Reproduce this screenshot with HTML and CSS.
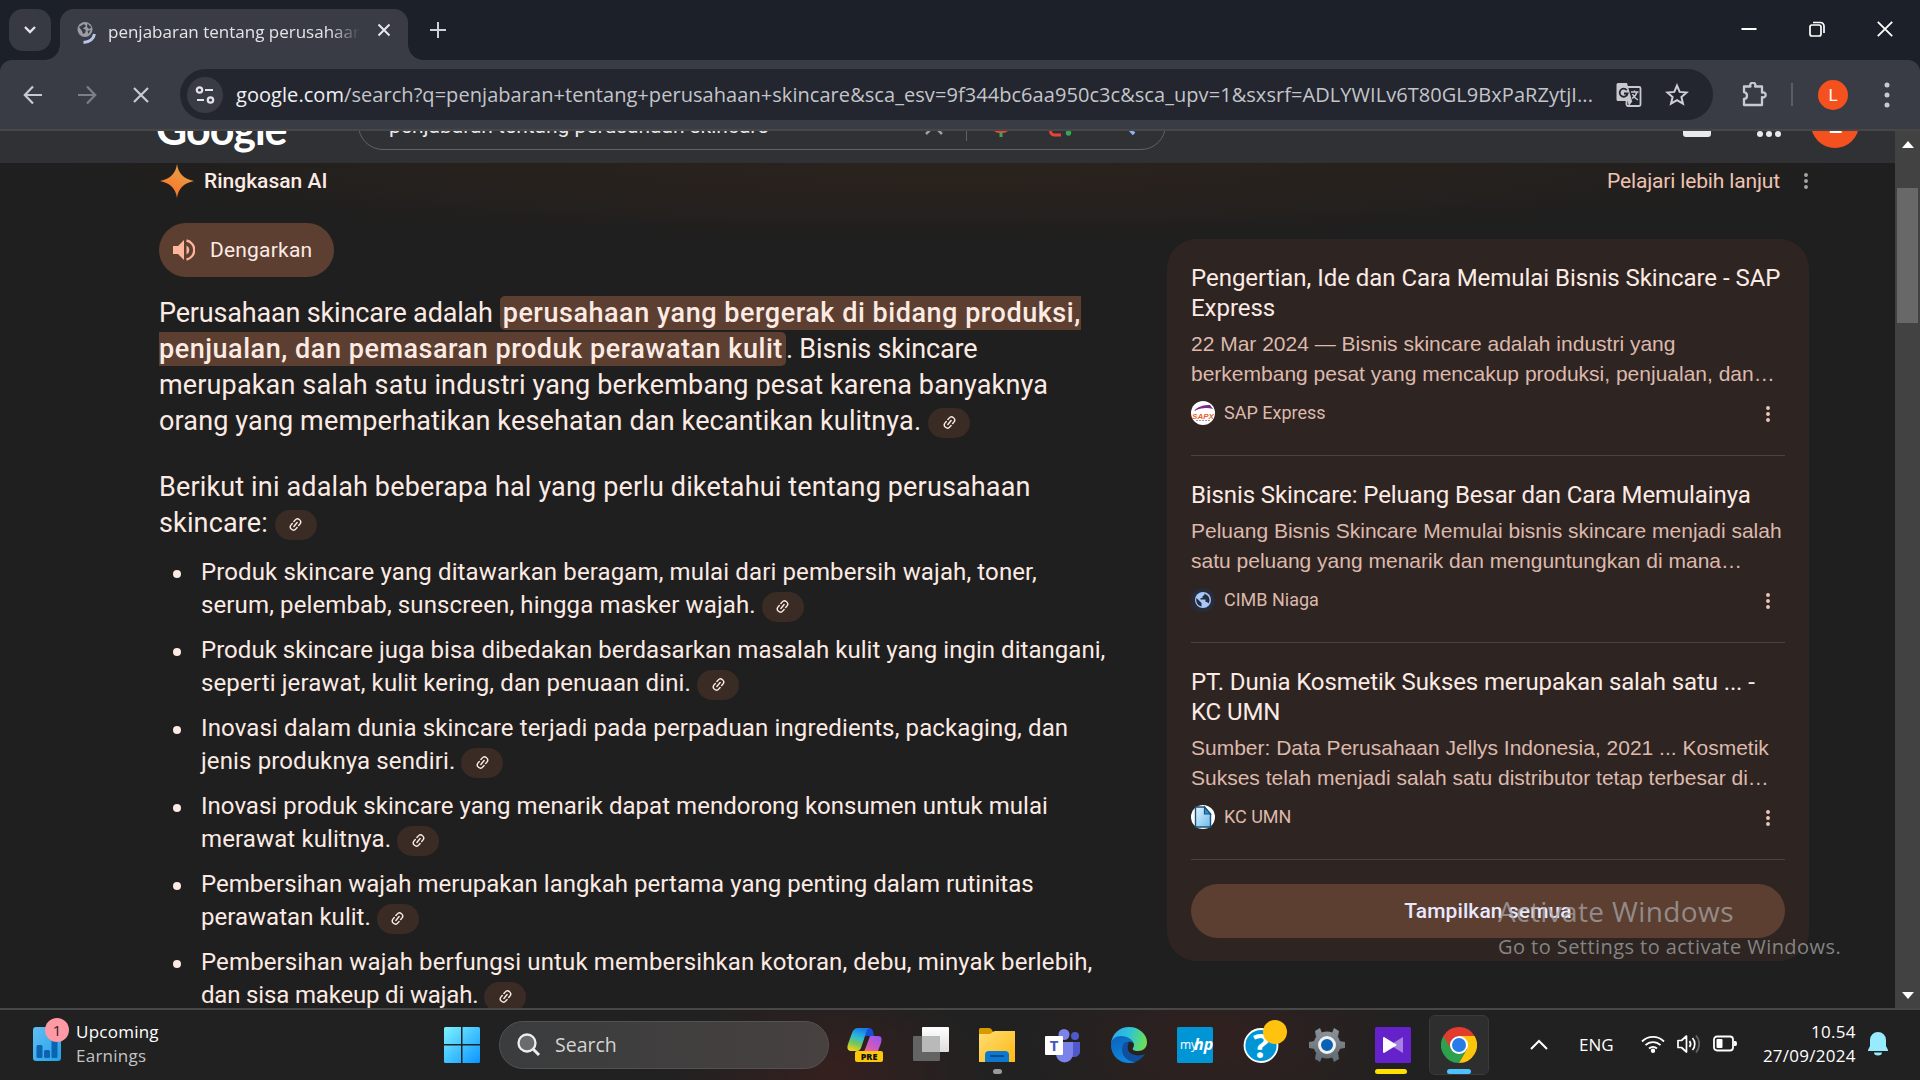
FILE: index.html
```html
<!DOCTYPE html>
<html lang="id">
<head>
<meta charset="utf-8">
<title>penjabaran tentang perusahaan skincare</title>
<link rel="stylesheet" href="styles.css">
</head>
<body>
<svg class="defs" width="0" height="0" aria-hidden="true">
  <symbol id="link" viewBox="0 0 24 24"><g fill="none" stroke="currentColor" stroke-width="2.3" stroke-linecap="round" transform="rotate(-50 12 12)"><path d="M10 7H7a5 5 0 0 0 0 10h3M14 7h3a5 5 0 0 1 0 10h-3M8 12h8"/></g></symbol>
  <symbol id="dots" viewBox="0 0 6 24"><g fill="currentColor"><circle cx="3" cy="4" r="2.6"/><circle cx="3" cy="12" r="2.6"/><circle cx="3" cy="20" r="2.6"/></g></symbol>
</svg>

<header class="tabstrip">
  <button class="tab-search"><svg width="14" height="10" viewBox="0 0 14 10"><path d="M2 2l5 5 5-5" fill="none" stroke="#e3e3e8" stroke-width="2.4"/></svg></button>
  <div class="tab">
    <svg class="favicon" width="20" height="24" viewBox="0 0 20 24"><circle cx="8" cy="8.500" r="7.500" fill="#9a9da6"/><path d="M2 6l5-3 2 2-3 2.500 3 1.500-1 3-2 1-1-3zM10.500 2.500l4 4-2.500 1.500-2-2zM10.500 10l3-1-2 4z" fill="#3a3c45"/><path d="M17.500 13c-1 5-5 8-11 8.500" fill="none" stroke="#b9c6ea" stroke-width="3"/></svg>
    <span class="tab-title">penjabaran tentang perusahaan</span>
    <svg class="tab-close" width="14" height="14" viewBox="0 0 14 14"><path d="M1.500 1.500l11 11M12.500 1.500l-11 11" stroke="#e8e8ec" stroke-width="2"/></svg>
  </div>
  <svg class="new-tab" width="16" height="16" viewBox="0 0 16 16"><path d="M8 0v16M0 8h16" stroke="#d0d2d8" stroke-width="2"/></svg>
  <div class="window-controls">
    <svg width="16" height="16" viewBox="0 0 16 16"><path d="M.5 8h15" stroke="#fff" stroke-width="2"/></svg>
    <svg width="16" height="16" viewBox="0 0 16 16" fill="none" stroke="#fff" stroke-width="1.700"><rect x="1" y="4" width="11" height="11" rx="2"/><path d="M4 1.500h7.500a3.500 3.500 0 0 1 3.500 3.500V12"/></svg>
    <svg width="16" height="16" viewBox="0 0 16 16"><path d="M.8.8l14.400 14.400M15.200.8L.8 15.200" stroke="#fff" stroke-width="1.800"/></svg>
  </div>
</header>

<nav class="toolbar">
  <div class="nav-buttons">
    <svg width="20" height="20" viewBox="0 0 20 20"><path d="M19 10H2M10 1.500L1.800 10 10 18.500" fill="none" stroke="#c7cad3" stroke-width="2.200"/></svg>
    <svg width="20" height="20" viewBox="0 0 20 20"><path d="M1 10h17M10 1.500l8.200 8.500-8.200 8.500" fill="none" stroke="#7d7f87" stroke-width="2.200"/></svg>
    <svg width="20" height="20" viewBox="0 0 20 20"><path d="M3 3l14 14M17 3L3 17" stroke="#c7cad3" stroke-width="2.200"/></svg>
  </div>
  <div class="omnibox">
    <span class="site-info"><svg width="20" height="20" viewBox="0 0 20 20" fill="none" stroke="#e3e3e8" stroke-width="2.200"><circle cx="4.500" cy="5" r="2.700"/><path d="M10 5h8M2 15h7"/><circle cx="15.500" cy="15" r="2.700"/></svg></span>
    <span class="url"><span class="host">google.com</span>/search?q=penjabaran+tentang+perusahaan+skincare&amp;sca_esv=9f344bc6aa950c3c&amp;sca_upv=1&amp;sxsrf=ADLYWILv6T80GL9BxPaRZytjI...</span>
    <span class="translate"><svg width="26" height="26" viewBox="0 0 26 26"><rect x="10.500" y="5" width="14" height="19" rx="1.500" fill="none" stroke="#c7c9cf" stroke-width="1.800"/><path d="M2 1h9l5 18H2a1.500 1.500 0 0 1-1.500-1.500v-15A1.500 1.500 0 0 1 2 1z" fill="#c7c9cf"/><path d="M11.500 19l1.500 5 3.500-5z" fill="#c7c9cf"/><path d="M10.800 8.200a4 4 0 1 0 .8 3.300H8" fill="none" stroke="#23262e" stroke-width="1.800"/><path d="M15 10h7.500M18.500 8.500V10M21 10c-.8 3-2.500 5-5 6.500M16.500 12c1 2.500 3 4.500 5.500 6" fill="none" stroke="#c7c9cf" stroke-width="1.400"/></svg></span>
    <svg width="24" height="24" viewBox="0 0 24 24"><path d="M12 2.600l2.700 6.300 6.900.6-5.200 4.500 1.600 6.700-6-3.600-6 3.600 1.600-6.700-5.200-4.500 6.900-.6z" fill="none" stroke="#cfd0d6" stroke-width="2"/></svg>
  </div>
  <svg class="puzzle" width="26" height="26" viewBox="0 0 26 26"><path d="M3 4.500h6.500a2.600 2.600 0 1 1 4.600 0H21v6.200a2.500 2.500 0 1 1 0 4.400V23H3v-6c4-.5 4-6.200 0-6.800z" fill="none" stroke="#c7cad3" stroke-width="2.300" stroke-linejoin="round"/></svg>
  <span class="separator"></span>
  <span class="avatar">L</span>
  <svg class="menu" width="6" height="26" viewBox="0 0 6 26" fill="#c7cad3"><circle cx="3" cy="3" r="2.500"/><circle cx="3" cy="13" r="2.500"/><circle cx="3" cy="23" r="2.500"/></svg>
</nav>

<div class="viewport">
  <div class="page">
    <div class="search-header">
      <span class="logo">Google</span>
      <div class="search-box">
        <span class="query">penjabaran tentang perusahaan skincare</span>
        <svg class="clear" width="18" height="22" viewBox="0 0 18 22"><path d="M1 3l16 16M17 3L1 19" stroke="#9aa0a6" stroke-width="2.500"/></svg>
        <span class="box-divider"></span>
        <svg class="mic" width="24" height="30" viewBox="0 0 24 30"><path d="M3 16c0 11 18 11 18 0" fill="none" stroke="#ea4335" stroke-width="4"/><path d="M12 25.500V30" stroke="#34a853" stroke-width="3"/></svg>
        <svg class="lens" width="24" height="24" viewBox="0 0 24 24"><path d="M1.500 14v4a4 4 0 0 0 4 4H12" fill="none" stroke="#ea4335" stroke-width="3"/><circle cx="19.500" cy="20" r="2.700" fill="#34a853"/></svg>
        <svg class="glass" width="26" height="26" viewBox="0 0 26 26"><circle cx="10" cy="10" r="7" fill="none" stroke="#8ab4f8" stroke-width="3"/><path d="M15 15l8 9" stroke="#8ab4f8" stroke-width="3.500"/></svg>
      </div>
      <div class="account">
        <svg width="28" height="30" viewBox="0 0 28 30"><path d="M9 2h10v12l9 10v3a3 3 0 0 1-3 3H3a3 3 0 0 1-3-3v-3L9 14z" fill="#e8eaed"/></svg>
        <svg width="24" height="24" viewBox="0 0 24 24" fill="#e8eaed"><circle cx="3" cy="12" r="3"/><circle cx="12" cy="12" r="3"/><circle cx="21" cy="12" r="3"/><circle cx="3" cy="21" r="3"/><circle cx="12" cy="21" r="3"/><circle cx="21" cy="21" r="3"/></svg>
        <span class="account-avatar">L</span>
      </div>
    </div>

    <main class="overview">
      <section class="answer">
        <h1 class="heading"><svg width="34" height="34" viewBox="0 0 34 34"><defs><linearGradient id="spark" x1="0" y1="1" x2=".6" y2="0"><stop offset="0" stop-color="#ff6a1a"/><stop offset="1" stop-color="#e8a04a"/></linearGradient></defs><path d="M17 0c1.500 9.500 6.500 15 17 17-10.500 2-15.500 7.500-17 17-1.500-9.500-6.500-15-17-17 10.500-2 15.500-7.500 17-17z" fill="url(#spark)"/></svg><span>Ringkasan AI</span></h1>
        <button class="listen"><svg width="22" height="22" viewBox="0 0 22 22"><path d="M0 7v8h5l6 6V1L5 7z" fill="#ffb59b"/><path d="M13.500 6.500v9a5 5 0 0 0 0-9z" fill="#ffb59b"/><path d="M13.500 1.500a9.700 9.700 0 0 1 0 19" fill="none" stroke="#ffb59b" stroke-width="2.300"/></svg><span>Dengarkan</span></button>
        <p><span class="tight">Perusahaan skincare adalah</span> <mark>perusahaan yang bergerak di bidang produksi,<br>penjualan, dan pemasaran produk perawatan kulit</mark><span class="tight">. Bisnis skincare</span><br>
          merupakan salah satu industri yang berkembang pesat karena banyaknya<br>
          orang yang memperhatikan kesehatan dan kecantikan kulitnya. <span class="chip"><svg><use href="#link"/></svg></span></p>
        <p>Berikut ini adalah beberapa hal yang perlu diketahui tentang perusahaan<br>
          skincare: <span class="chip"><svg><use href="#link"/></svg></span></p>
        <ul>
          <li>Produk skincare yang ditawarkan beragam, mulai dari pembersih wajah, toner,<br>serum, pelembab, sunscreen, hingga masker wajah. <span class="chip"><svg><use href="#link"/></svg></span></li>
          <li><span class="snug">Produk skincare juga bisa dibedakan berdasarkan masalah kulit yang ingin ditangani,</span><br>seperti jerawat, kulit kering, dan penuaan dini. <span class="chip"><svg><use href="#link"/></svg></span></li>
          <li>Inovasi dalam dunia skincare terjadi pada perpaduan ingredients, packaging, dan<br>jenis produknya sendiri. <span class="chip"><svg><use href="#link"/></svg></span></li>
          <li><span class="snug">Inovasi produk skincare yang menarik dapat mendorong konsumen untuk mulai</span><br>merawat kulitnya. <span class="chip"><svg><use href="#link"/></svg></span></li>
          <li><span class="snug">Pembersihan wajah merupakan langkah pertama yang penting dalam rutinitas</span><br><span class="snug">perawatan kulit.</span> <span class="chip"><svg><use href="#link"/></svg></span></li>
          <li>Pembersihan wajah berfungsi untuk membersihkan kotoran, debu, minyak berlebih,<br><span class="tight">dan sisa makeup di wajah.</span> <span class="chip"><svg><use href="#link"/></svg></span></li>
        </ul>
      </section>

      <aside class="sources">
        <div class="learn-more"><span>Pelajari lebih lanjut</span><svg><use href="#dots"/></svg></div>
        <div class="card">
          <article>
            <h2 class="wide">Pengertian, Ide dan Cara Memulai Bisnis Skincare - SAP<br>Express</h2>
            <p>22 Mar 2024 — Bisnis skincare adalah industri yang<br>berkembang pesat yang mencakup produksi, penjualan, dan…</p>
            <footer><svg width="24" height="24" viewBox="0 0 24 24"><circle cx="12" cy="12" r="12" fill="#fff"/><path d="M3 10c4-5 10-6 16-6l3 4c-6-2-13-1-19 2z" fill="#7b2a86"/><text x="12" y="17.500" text-anchor="middle" class="sapx">SAPX</text><path d="M5 19.500h15" stroke="#b48bbd" stroke-width="1" stroke-dasharray="2 1"/></svg><span>SAP Express</span><svg class="kebab"><use href="#dots"/></svg></footer>
          </article>
          <article>
            <h2>Bisnis Skincare: Peluang Besar dan Cara Memulainya</h2>
            <p>Peluang Bisnis Skincare Memulai bisnis skincare menjadi salah<br>satu peluang yang menarik dan menguntungkan di mana…</p>
            <footer><svg width="24" height="24" viewBox="0 0 24 24"><circle cx="12" cy="12" r="12" fill="#262c3a"/><circle cx="12" cy="12" r="8" fill="#a8c7fa"/><path d="M5.500 10l5 5v3.500c-4-.8-6-5-5-8.500zM13 5.500c1 1 0 2.500-1.500 2.500v2h-2v1.500h5V14h1.500l1.500 1.500c2-3 1.500-8-4.500-10z" fill="#262c3a"/></svg><span>CIMB Niaga</span><svg class="kebab"><use href="#dots"/></svg></footer>
          </article>
          <article>
            <h2>PT. Dunia Kosmetik Sukses merupakan salah satu ... -<br>KC UMN</h2>
            <p>Sumber: Data Perusahaan Jellys Indonesia, 2021 ... Kosmetik<br>Sukses telah menjadi salah satu distributor tetap terbesar di…</p>
            <footer><svg width="24" height="24" viewBox="0 0 24 24"><defs><linearGradient id="doc" x1="0" y1="0" x2="1" y2="1"><stop offset="0" stop-color="#e4f4fd"/><stop offset="1" stop-color="#6cbcec"/></linearGradient></defs><circle cx="12" cy="12" r="12" fill="#fff"/><path d="M4.500 2h9l6 7v13h-15z" fill="url(#doc)" stroke="#15537e" stroke-width="1.400"/><path d="M13.500 2v7h6z" fill="#2b95d6" stroke="#15537e" stroke-width="1.200"/></svg><span>KC UMN</span><svg class="kebab"><use href="#dots"/></svg></footer>
          </article>
          <button class="show-all">Tampilkan semua</button>
        </div>
      </aside>
    </main>
  </div>
  <div class="scrollbar">
    <svg width="12" height="7" viewBox="0 0 12 7"><path d="M6 0l6 7H0z" fill="#fff"/></svg>
    <span class="thumb"></span>
    <svg width="12" height="7" viewBox="0 0 12 7"><path d="M0 0h12L6 7z" fill="#fff"/></svg>
  </div>
</div>

<div class="watermark"><strong>Activate Windows</strong><span>Go to Settings to activate Windows.</span></div>

<footer class="taskbar">
  <div class="widget">
    <span class="widget-icon"><svg width="28" height="34" viewBox="0 0 28 34"><defs><linearGradient id="wg" x1="0" y1="0" x2="1" y2="1"><stop offset="0" stop-color="#62bdf3"/><stop offset="1" stop-color="#1fa3ea"/></linearGradient></defs><rect width="28" height="34" rx="3" fill="url(#wg)"/><rect x="3.500" y="18" width="6" height="13" rx="1.500" fill="#0c63b0"/><rect x="11" y="23" width="6" height="8" rx="1.500" fill="#0c63b0"/><rect x="18.500" y="12" width="6" height="19" rx="1.500" fill="#0c63b0"/></svg><span class="badge">1</span></span>
    <div class="widget-text"><span>Upcoming</span><span class="dim">Earnings</span></div>
  </div>
  <div class="dock">
    <svg class="start" width="36" height="36" viewBox="0 0 36 36"><defs><linearGradient id="win" x1="0" y1="0" x2="1" y2="1"><stop offset="0" stop-color="#7df3ff"/><stop offset="1" stop-color="#0a95ff"/></linearGradient></defs><path d="M1.500 0H17v17H0V1.500A1.500 1.500 0 0 1 1.500 0zM18.500 0h16A1.500 1.500 0 0 1 36 1.500V17H18.500zM0 18.500h17V36H1.500A1.500 1.500 0 0 1 0 34.500zM18.500 18.500H36v16a1.500 1.500 0 0 1-1.500 1.500h-16z" fill="url(#win)"/></svg>
    <div class="task-search"><svg width="24" height="24" viewBox="0 0 24 24"><circle cx="10" cy="10" r="8.500" fill="#6a6b6c" stroke="#eee" stroke-width="2.300"/><path d="M16 16l6 6" stroke="#eee" stroke-width="3"/></svg><span>Search</span></div>
    <div class="apps">
      <span class="app"><svg width="36" height="36" viewBox="0 0 36 36"><defs><linearGradient id="c1" x1=".6" y1="0" x2=".3" y2="1"><stop offset="0" stop-color="#1a7be8"/><stop offset=".4" stop-color="#2bbcd8"/><stop offset=".7" stop-color="#7cc653"/><stop offset="1" stop-color="#f5d021"/></linearGradient><linearGradient id="c2" x1=".8" y1="0" x2=".2" y2="1"><stop offset="0" stop-color="#9a55f0"/><stop offset=".5" stop-color="#d659b8"/><stop offset="1" stop-color="#ff8a5c"/></linearGradient></defs><path d="M17 1h5c3 0 4 2 5 8h-5l-4 0z" fill="#1750d8"/><path d="M11 1h11c-2 1-3 4-4 8l-4 12c-1 2-2 3-4 3H4c-4 0-4-4-3-7L5 6c1-3 3-5 6-5z" fill="url(#c1)"/><path d="M23 9h8c4 0 4 3 3 7l-3 8c-1 4-2 6-5 6H14c-2 0-4-1-5-5h6c2 0 3-2 4-5z" fill="url(#c2)"/><rect x="8" y="24" width="28" height="11" rx="2" fill="#fcc70b"/><text x="22" y="33" text-anchor="middle" class="pre">PRE</text></svg></span>
      <span class="app"><svg width="36" height="36" viewBox="0 0 36 36"><defs><linearGradient id="tv" x1="0" y1="0" x2="0" y2="1"><stop offset="0" stop-color="#fff"/><stop offset="1" stop-color="#ddd"/></linearGradient></defs><rect y="9" width="27" height="25" rx="1" fill="#646464"/><rect x="9" width="27" height="25" rx="1" fill="url(#tv)"/><rect x="9" y="9" width="18" height="16" fill="#b9b9b9"/></svg></span>
      <span class="app"><svg width="36" height="36" viewBox="0 0 36 36"><defs><linearGradient id="fo" x1="0" y1="0" x2="1" y2="1"><stop offset="0" stop-color="#ffdd74"/><stop offset="1" stop-color="#fdb913"/></linearGradient></defs><path d="M0 2.500A1.500 1.500 0 0 1 1.500 1H10q2 0 3 2l1.500 3-4 4H0z" fill="#d99a00"/><path d="M0 7h9.500q2 0 3.500-1.500T16 4h20v31H0z" fill="url(#fo)"/><path d="M6 35v-7a4 4 0 0 1 4-4h16a4 4 0 0 1 4 4v7z" fill="#0d78d0"/><path d="M11 29h14" stroke="#084a8c" stroke-width="2"/></svg><i class="run grey"></i></span>
      <span class="app"><svg width="36" height="36" viewBox="0 0 36 36"><circle cx="30" cy="9" r="4" fill="#5059c9"/><path d="M24 15h11v9c0 4-3 6-6 6s-5-2-5-6z" fill="#5059c9"/><circle cx="19" cy="7.500" r="5.500" fill="#7b83eb"/><path d="M11 15h17v12a8.500 8.500 0 0 1-17 0z" fill="#7b83eb"/><rect y="9" width="18" height="19" rx="1" fill="#fff"/><text x="9" y="24" text-anchor="middle" class="teams">T</text></svg></span>
      <span class="app"><svg width="36" height="36" viewBox="0 0 36 36"><defs><linearGradient id="e1" x1="0" y1=".2" x2="1" y2=".4"><stop offset="0" stop-color="#29a9ee"/><stop offset=".5" stop-color="#2fc3d8"/><stop offset="1" stop-color="#69e056"/></linearGradient><linearGradient id="e2" x1="0" y1="0" x2=".4" y2="1"><stop offset="0" stop-color="#0a63ba"/><stop offset="1" stop-color="#1085dd"/></linearGradient></defs><path d="M0 17C1 6 9 0 18 0c11 0 18 8 18 15 0 6-4 9-9 9-4 0-6-1-5-3 3-4-1-9-7-10C8 10 2 12 0 17z" fill="url(#e1)"/><path d="M0 18c0-6 5-9 10-9 7 0 12 4 12 7-4-3-9 0-9 5 0 7 6 13 12 14C12 39 0 31 0 18z" fill="url(#e2)"/><path d="M13 16c-5 8 0 18 11 19 4-1 8-5 10-8-7 3-15 1-17-4-1-3 0-6 1-7-1-1-3-1-5 0z" fill="#0f4f9e"/></svg></span>
      <span class="app"><svg width="36" height="36" viewBox="0 0 36 36"><rect width="36" height="36" rx="1.500" fill="#0096d6"/><text x="3" y="22" class="my">my</text><text x="17" y="23" class="hp">hp</text></svg></span>
      <span class="app"><svg width="36" height="36" viewBox="0 0 36 36"><circle cx="18" cy="18.500" r="16.500" fill="#0096d6" stroke="#fff" stroke-width="1.800"/><text x="18" y="31" text-anchor="middle" class="help">?</text></svg><b class="dot"></b></span>
      <span class="app"><svg width="36" height="36" viewBox="0 0 36 36"><defs><linearGradient id="ge" x1="0" y1="0" x2="0" y2="1"><stop offset="0" stop-color="#8b9299"/><stop offset="1" stop-color="#616a72"/></linearGradient></defs><g fill="url(#ge)"><circle cx="18" cy="18" r="13.500"/><path d="M13 6L11 1 6 4l1 6zM23 6l2-5 5 3-1 6zM13 30l-2 5-5-3 1-6zM23 30l2 5 5-3-1-6zM6 14l-6 1v6l6 1zM30 14l6 1v6l-6 1z"/></g><circle cx="18" cy="18" r="7.500" fill="#0b62b5" stroke="#f1f1f1" stroke-width="3"/></svg></span>
      <span class="app"><svg width="36" height="36" viewBox="0 0 36 36"><rect width="36" height="36" rx="1.500" fill="#6522ca"/><path d="M28 10v16L15 18z" fill="#a582e2"/><path d="M9 10l13 8-13 8q-1 0-1-1V11q0-1 1-1z" fill="#fff"/></svg><i class="run yellow"></i></span>
      <span class="app active"><svg width="36" height="36" viewBox="0 0 36 36"><path d="M18 18L2.400 9a18 18 0 0 0 15.600 27l7.800-13.500z" fill="#2da14c"/><path d="M18 9h15.600A18 18 0 0 1 18 36l8-14z" fill="#fdc60a"/><path d="M18 9a9 9 0 0 0-7.800 13.500L2.400 9A18 18 0 0 1 33.600 9z" fill="#e33b2e"/><circle cx="18" cy="18" r="9" fill="#fff"/><circle cx="18" cy="18" r="7" fill="#2a7bea"/></svg><i class="run blue"></i></span>
    </div>
  </div>
  <div class="tray">
    <svg class="chev" width="18" height="11" viewBox="0 0 18 11"><path d="M1 10l8-8 8 8" fill="none" stroke="#fff" stroke-width="2"/></svg>
    <span class="lang">ENG</span>
    <div class="status">
      <svg width="24" height="18" viewBox="0 0 24 18" fill="none" stroke="#fff" stroke-width="1.800"><path d="M1 6.500a15.500 15.500 0 0 1 22 0M4.500 10.200a10.500 10.500 0 0 1 15 0M8 13.500a6 6 0 0 1 8 0"/><circle cx="12" cy="15.800" r="1.300" fill="#fff"/></svg>
      <svg width="24" height="20" viewBox="0 0 24 20" fill="none" stroke="#fff" stroke-width="1.700"><path d="M1 6.500v7h3.500L9.500 18V2L4.500 6.500z" stroke-linejoin="round"/><path d="M12.500 7a5 5 0 0 1 0 6M15.500 4a9 9 0 0 1 0 12"/><path d="M19 1.500a13 13 0 0 1 0 17" stroke="#666"/></svg>
      <svg width="24" height="18" viewBox="0 0 24 18"><rect x="1" y="1.500" width="19" height="14" rx="3" fill="none" stroke="#fff" stroke-width="1.800"/><rect x="3.500" y="4" width="6" height="9" rx="1" fill="#fff"/><path d="M21 6h1.500q1.500 0 1.500 2.500T22.500 11H21z" fill="#fff"/></svg>
    </div>
    <div class="clock"><span>10.54</span><span>27/09/2024</span></div>
    <svg class="bell" width="20" height="24" viewBox="0 0 20 24"><path d="M10 0a8 8 0 0 1 8 8v6l2 4v1H0v-1l2-4V8a8 8 0 0 1 8-8zM6 20.500h8a4 3 0 0 1-8 0z" fill="#97ebff"/></svg>
  </div>
</footer>
</body>
</html>
```
FILE: styles.css
```css
* { box-sizing: border-box; }
body { margin: 0; width: 1920px; height: 1080px; overflow: hidden; display: flex; flex-direction: column; position: relative; background: #1c2028; color: #fcebe4; font-family: Roboto, "Liberation Sans", sans-serif; }
button { border: 0; padding: 0; font: inherit; color: inherit; }
h1, h2, p, ul { margin: 0; padding: 0; font-weight: 400; }
svg { flex: none; display: block; }
.defs { position: absolute; }

.tabstrip { height: 60px; background: #1c2028; display: flex; align-items: flex-start; padding-left: 9px; font-family: "Open Sans", sans-serif; }
.tab-search { width: 42px; height: 42px; margin-top: 9px; border-radius: 14px; background: #383a43; display: grid; place-items: center; }
.tab { position: relative; width: 348px; height: 51px; margin: 9px 0 0 9px; border-radius: 14px 14px 0 0; background: #3a3c45; display: flex; align-items: center; padding: 0 17px 4px; }
.tab::before, .tab::after { content: ""; position: absolute; bottom: 0; width: 15px; height: 15px; }
.tab::before { left: -15px; background: radial-gradient(circle at 0 0, transparent 14.500px, #3a3c45 15px); }
.tab::after { right: -15px; background: radial-gradient(circle at 100% 0, transparent 14.500px, #3a3c45 15px); }
.tab-title { width: 252px; margin: 0 0 2px 11px; font-size: 17px; line-height: 24px; white-space: nowrap; overflow: hidden; color: #e4e4e8; -webkit-mask-image: linear-gradient(90deg, #000 88%, transparent); mask-image: linear-gradient(90deg, #000 88%, transparent); }
.tab-close { margin: 0 0 5px 17px; }
.new-tab { margin: 22px 0 0 22px; }
.window-controls { margin: 21px 27px 0 auto; display: flex; gap: 52px; }

.toolbar { height: 71px; background: #3a3c45; border-radius: 12px 12px 0 0; border-bottom: 2px solid #474747; display: flex; align-items: center; padding-left: 23px; font-family: "Open Sans", sans-serif; }
.nav-buttons { display: flex; gap: 34px; width: 157px; }
.omnibox { width: 1533px; height: 51px; border-radius: 26px; background: #23262e; display: flex; align-items: center; padding-left: 7px; }
.site-info { width: 36px; height: 36px; border-radius: 50%; background: #3a3c45; display: grid; place-items: center; }
.url { margin-left: 13px; font-size: 20px; letter-spacing: .057px; color: #c3c5ca; white-space: nowrap; }
.host { color: #f0f0f3; }
.translate { margin: 0 23px 0 auto; }
.omnibox > svg { margin-right: 24px; }
.puzzle { margin-left: 28px; }
.separator { width: 2px; height: 23px; margin-left: 24px; background: #5a5c66; }
.avatar { width: 30px; height: 30px; margin-left: 25px; border-radius: 50%; background: #f4511e; color: #fff; font: 17px/30px Roboto, sans-serif; text-align: center; }
.menu { margin-left: 36px; }

.viewport { height: 877px; display: flex; background: #1f1f1f; }
.page { width: 1895px; overflow: hidden; }
.search-header { height: 32px; overflow: hidden; background: #303134; display: flex; align-items: flex-end; padding-left: 156px; }
.logo { width: 136px; height: 50px; margin-bottom: 9px; font: 700 43px/50px Lato, sans-serif; letter-spacing: -1px; color: #fff; }
.search-box { width: 808px; height: 66px; margin: 0 0 13px 66px; border: 1px solid #5f6368; border-radius: 25px; display: flex; align-items: flex-end; padding-left: 30px; }
.query { width: 536px; margin-bottom: 11px; font-size: 21px; color: #e8eaed; white-space: nowrap; }
.clear { margin: 0 23px 12px 0; }
.box-divider { width: 1px; height: 40px; margin: 0 22px 8px 0; background: #5f6368; }
.mic { margin: 0 36px 12px 0; }
.lens { margin: 0 38px 12px 0; }
.glass { margin-bottom: 13px; }
.account { display: flex; align-items: flex-end; margin-left: 517px; gap: 46px; }
.account svg { margin-bottom: 26px; }
.account-avatar { width: 48px; height: 48px; margin: 0 0 15px -16px; border-radius: 50%; background: #f4511e; color: #fff; font-size: 27px; line-height: 48px; text-align: center; }

.overview { height: 845px; display: flex; justify-content: space-between; padding: 0 86px 0 159px; background: radial-gradient(ellipse 900px 76px at 950px 0, #2a221d 0, #27211d 50%, #1f1f1f 100%), #1f1f1f; }
.answer { width: 960px; overflow: hidden; }
.heading { display: flex; align-items: center; gap: 10px; height: 36px; font-size: 21px; font-weight: 500; margin-left: 1px; }
.listen { display: flex; align-items: center; gap: 15px; width: 175px; height: 54px; margin: 24px 0 18px; padding-left: 14px; border-radius: 27px; background: #5c3f31; font-size: 21px; letter-spacing: .2px; }
.answer p { font-size: 27px; line-height: 36px; letter-spacing: .145px; margin-bottom: 30px; white-space: nowrap; }
.answer .tight { letter-spacing: -.17px; }
.answer .snug { letter-spacing: .03px; }
mark { background: #5c3f31; color: inherit; font-weight: 500; padding: 1px 3px; border-radius: 5px; letter-spacing: .53px; }
.chip { display: inline-grid; place-items: center; width: 42px; height: 30px; border-radius: 15px; background: #3a2b25; color: #fcebe4; vertical-align: middle; }
.chip svg { width: 15px; height: 15px; }
.answer ul { list-style: none; margin-top: -15px; }
.answer li { position: relative; padding-left: 42px; margin-bottom: 12px; height: 66px; font-size: 24px; line-height: 33px; letter-spacing: .125px; white-space: nowrap; }
.answer li::before { content: ""; position: absolute; left: 14px; top: 14px; width: 8px; height: 8px; border-radius: 50%; background: #fcebe4; }

.sources { width: 642px; }
.learn-more { height: 36px; display: flex; align-items: center; justify-content: flex-end; gap: 23px; margin-bottom: 40px; font-size: 21px; letter-spacing: -.15px; color: #efc3b2; }
.learn-more svg { width: 6px; height: 18px; color: #a4a6a8; }
.card { height: 722px; border-radius: 30px; background: #2e2523; padding: 0 24px; white-space: nowrap; }
article { border-bottom: 1px solid #52403b; padding: 24px 0 30px; }
article h2 { font-size: 24px; line-height: 30px; letter-spacing: -.11px; }
article .wide { letter-spacing: -.03px; }
article p { margin: 6px 0 12px; font: 21px/30px "Liberation Sans", Arial, sans-serif; color: #ddb9ac; }
article footer { height: 24px; display: flex; align-items: center; gap: 9px; font-size: 18px; color: #ddb9ac; }
article footer span { margin-bottom: 2px; }
.kebab { width: 6px; height: 18px; margin: 2px 14px 0 auto; color: #ecc7bb; }
.sapx { font: italic 700 8px "Liberation Sans", sans-serif; fill: #e8622a; }
.show-all { width: 594px; height: 54px; margin-top: 24px; border-radius: 27px; background: #5c3f31; font-size: 21px; font-weight: 500; letter-spacing: .1px; color: #e9e8ff; }

.scrollbar { width: 25px; background: #424242; display: flex; flex-direction: column; align-items: center; padding: 10px 0 9px; }
.thumb { width: 21px; height: 135px; margin: 40px 0 auto; background: #686868; }

.watermark { position: absolute; left: 1498px; top: 889px; display: flex; flex-direction: column; align-items: flex-start; color: rgba(165, 165, 165, .75); font: 20px/28px "Open Sans", sans-serif; letter-spacing: .44px; white-space: nowrap; }
.watermark strong { font-size: 28px; line-height: 44px; font-weight: 400; letter-spacing: .38px; }

.taskbar { height: 72px; border-top: 2px solid #484848; background: radial-gradient(ellipse 160px 90px at 830px 60px, #35201f, transparent), radial-gradient(ellipse 200px 120px at 1220px 30px, #30211f, transparent), #212121; display: flex; align-items: center; font-family: "Open Sans", sans-serif; color: #fff; }
.widget { width: 444px; padding-left: 33px; display: flex; align-items: center; gap: 15px; }
.widget-icon { position: relative; margin-bottom: 3px; }
.badge { position: absolute; left: 12px; top: -9px; width: 24px; height: 24px; border-radius: 50%; background: #ff99a4; color: #222; font-size: 15px; line-height: 24px; text-align: center; }
.widget-text, .clock { display: flex; flex-direction: column; margin-bottom: 2px; font-size: 17px; line-height: 24px; letter-spacing: .25px; }
.dim { color: #c4c4c4; }
.dock { width: 1056px; display: flex; align-items: center; margin-bottom: 1px; }
.task-search { width: 330px; height: 48px; margin: 0 6px 0 19px; padding-left: 17px; border-radius: 24px; border: 1px solid #525252; background: linear-gradient(90deg, #3a3c3d, #474140); display: flex; align-items: center; gap: 14px; font-size: 19.500px; color: #d4d4d4; }
.apps { display: flex; }
.app { position: relative; width: 60px; height: 60px; margin-right: 6px; border-radius: 6px; display: grid; place-items: center; }
.active { background: #2e2e2e; border: 1px solid #3a3a3a; }
.run { position: absolute; bottom: 1px; left: 12px; height: 5px; border-radius: 3px; }
.grey { left: 26px; width: 9px; background: #9a9a9a; }
.yellow { width: 32px; background: #ffe100; }
.blue { left: 17px; width: 24px; background: #4cc2ff; bottom: 0; }
.dot { position: absolute; left: 32px; top: 5px; width: 24px; height: 24px; border-radius: 50%; background: #ffc20e; }
.my { font: 12px "Open Sans", sans-serif; fill: #fff; }
.hp { font: italic 700 16px "Open Sans", sans-serif; fill: #fff; }
.pre { font: 800 9px "Open Sans", sans-serif; fill: #111; }
.teams { font: 700 15px "Open Sans", sans-serif; fill: #4b53bc; }
.help { font: 700 34px "Open Sans", sans-serif; fill: #fff; }
.tray { flex: 1; display: flex; align-items: center; padding-left: 30px; margin-bottom: 2px; }
.lang { margin-left: 31px; font-size: 17px; }
.status { display: flex; gap: 12px; margin-left: 27px; align-items: center; }
.clock { width: 106px; margin: 0 0 0 13px; align-items: flex-end; }
.bell { margin-left: 12px; }
```
